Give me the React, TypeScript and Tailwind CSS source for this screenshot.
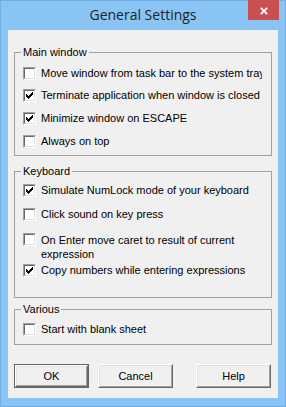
import React from "react";

const Check = () => (
  <svg width="7" height="7" viewBox="0 0 7 7" shapeRendering="crispEdges" className="block">
    <path
      fill="#000"
      d="M6 0h1v1H6zM5 1h2v1H5zM0 2h1v1H0zM4 2h3v1H4zM0 3h2v1H0zM3 3h3v1H3zM0 4h5v1H0zM1 5h3v1H1zM2 6h1v1H2z"
    />
  </svg>
);

const Box = ({ checked }: { checked?: boolean }) => (
  <span className="block w-[13px] h-[13px] shrink-0 border border-t-[#a0a0a0] border-l-[#a0a0a0] border-r-white border-b-white">
    <span className="flex w-[11px] h-[11px] items-center justify-center bg-white border border-t-[#696969] border-l-[#696969] border-r-[#e3e3e3] border-b-[#e3e3e3]">
      {checked ? <Check /> : null}
    </span>
  </span>
);

const Row = ({
  label,
  checked,
  className,
  clip,
  wrap,
}: {
  label: string;
  checked?: boolean;
  className?: string;
  clip?: boolean;
  wrap?: boolean;
}) => (
  <div className={"flex items-start ml-[8px] gap-[5px] " + (className ?? "")}>
    <Box checked={checked} />
    <span
      className={
        "w-[221px] text-black " +
        (clip ? "whitespace-nowrap overflow-hidden " : "") +
        (wrap ? "leading-[14px]" : "leading-[13px]")
      }
    >
      {label}
    </span>
  </div>
);

const Btn = ({ label, def, className }: { label: string; def?: boolean; className?: string }) => {
  const inner = (
    <span className="flex flex-1 border border-t-white border-l-white border-r-[#696969] border-b-[#696969]">
      <span className="flex flex-1 items-center justify-center bg-[#f0f0f0] border border-t-[#e3e3e3] border-l-[#e3e3e3] border-r-[#a0a0a0] border-b-[#a0a0a0] text-black leading-[13px]">
        {label}
      </span>
    </span>
  );
  return (
    <div
      className={
        "flex w-[75px] h-[24px] " + (def ? "border border-[#646464] " : "") + (className ?? "")
      }
    >
      {inner}
    </div>
  );
};

export default function App() {
  return (
    <div
      className="relative w-[286px] h-[407px] bg-[#8ac4f4] flex flex-col shadow-[inset_0_0_0_1px_#72aee2]"
      style={{ fontFamily: '"Liberation Sans", Arial, sans-serif' }}
    >
      <div className="h-[30px] shrink-0 flex items-center justify-center">
        <span
          className="text-[14px] text-[#1f1f1f] leading-none"
          style={{ fontFamily: '"Open Sans", "Noto Sans", sans-serif' }}
        >
          General Settings
        </span>
      </div>
      <div className="absolute top-0 right-[7px] w-[31px] h-[20px] bg-[#c75050] flex items-center justify-center pt-[2px]">
        <svg width="8" height="8" viewBox="0 0 8 8">
          <path d="M0.8 0.8L7.2 7.2M7.2 0.8L0.8 7.2" stroke="#fff" strokeWidth="1.8" />
        </svg>
      </div>

      <div className="mx-[8px] h-[368px] bg-[#f0f0f0] flex flex-col text-[11px]">
        <fieldset className="mt-[16px] mx-[6px] border border-[#a0a0a0] pt-[8px] pb-[7px]">
          <legend className="ml-[6px] px-[2px] leading-[13px] text-black">Main window</legend>
          <Row label="Move window from task bar to the system tray" clip />
          <Row label="Terminate application when window is closed" checked className="mt-[9px]" />
          <Row label="Minimize window on ESCAPE" checked className="mt-[10px]" />
          <Row label="Always on top" className="mt-[10px]" />
        </fieldset>

        <fieldset className="mt-[9px] mx-[6px] border border-[#a0a0a0] pt-[6px] pb-[20px]">
          <legend className="ml-[6px] px-[2px] leading-[13px] text-black">Keyboard</legend>
          <Row label="Simulate NumLock mode of your keyboard" checked />
          <Row label="Click sound on key press" className="mt-[11px]" />
          <Row label="On Enter move caret to result of current expression" wrap className="mt-[12px]" />
          <Row label="Copy numbers while entering expressions" checked className="mt-[3px]" />
        </fieldset>

        <fieldset className="mt-[5px] mx-[6px] border border-[#a0a0a0] pt-[7px] pb-[8px]">
          <legend className="ml-[6px] px-[2px] leading-[13px] text-black">Various</legend>
          <Row label="Start with blank sheet" />
        </fieldset>

        <div className="mt-[19px] flex">
          <Btn label="OK" def className="ml-[6px]" />
          <Btn label="Cancel" className="ml-[9px]" />
          <Btn label="Help" className="ml-[23px]" />
        </div>
      </div>
    </div>
  );
}
